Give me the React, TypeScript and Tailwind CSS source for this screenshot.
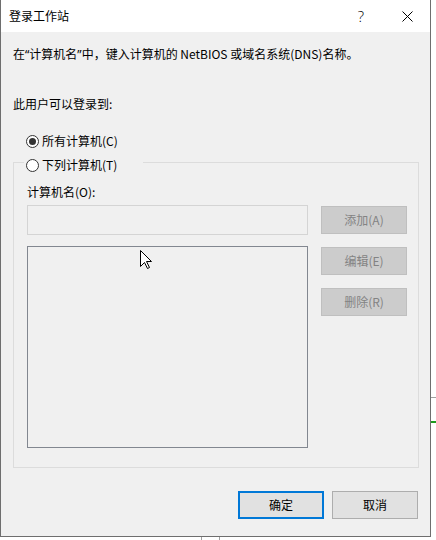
import React from "react";

const font = { fontFamily: '"Noto Sans CJK SC", "Noto Sans", sans-serif' };
const latin = { fontFamily: '"Noto Sans", sans-serif' };

function Radio({ checked, label }: { checked?: boolean; label: string }) {
  return (
    <div className="flex items-center h-4">
      <span className="w-[13px] h-[13px] rounded-full border border-[#333333] bg-white flex items-center justify-center">
        {checked && <span className="w-[7px] h-[7px] rounded-full bg-[#333333]" />}
      </span>
      <span className="ml-[3px] leading-4">{label}</span>
    </div>
  );
}

function DisabledBtn({ label }: { label: string }) {
  return (
    <div className="w-[86px] h-[28px] bg-[#cccccc] border border-[#bfbfbf] flex items-center justify-center text-[#838383] leading-4">
      {label}
    </div>
  );
}

export default function App() {
  return (
    <div className="relative w-[436px] h-[540px] bg-white overflow-hidden text-[12px] text-black" style={font}>
      <div className="w-[431px] h-[537px] border-l border-r border-b border-[#6e6e6e] bg-[#f0f0f0] flex flex-col">
        {/* Title bar */}
        <div className="h-[32px] bg-white flex items-center pl-[8px]">
          <div className="flex-1 leading-4">登录工作站</div>
          <div className="w-[46px] h-[32px] flex items-center justify-center text-[15px] font-light leading-none text-black" style={{ fontFamily: '"Open Sans", sans-serif' }}>
            ?
          </div>
          <div className="w-[46px] h-[32px] flex items-center justify-center">
            <svg width="11" height="11" viewBox="0 0 11 11">
              <path d="M0.5 0.5 L10.5 10.5 M10.5 0.5 L0.5 10.5" stroke="#000" strokeWidth="1" />
            </svg>
          </div>
        </div>

        {/* Body */}
        <div className="pl-[12px] flex flex-col">
          <div className="pt-[14px] leading-4">
            在<span style={latin}>“</span>计算机名<span style={latin}>”</span>中，键入计算机的 NetBIOS 或域名系统(DNS)名称。
          </div>
          <div className="mt-[33px] leading-4">此用户可以登录到:</div>
          <div className="mt-[21px] pl-[13px]">
            <Radio checked label="所有计算机(C)" />
          </div>

          <div className="relative mt-[13px] w-[406px] h-[306px] border border-[#dcdcdc]">
            <div className="absolute -top-[6px] left-[10px] w-[119px] pl-[2px] bg-[#f0f0f0]">
              <Radio label="下列计算机(T)" />
            </div>
            <div className="pt-[21px] pl-[13px] leading-4">计算机名(O):</div>
            <div className="mt-[5px] pl-[13px] flex">
              <div className="w-[281px] flex flex-col">
                <div className="h-[30px] border border-[#d4d4d4] bg-[#f0f0f0]" />
                <div className="mt-[11px] h-[202px] border border-[#828790] bg-[#f0f0f0]" />
              </div>
              <div className="ml-[13px] mt-[1px] flex flex-col gap-[13px]">
                <DisabledBtn label="添加(A)" />
                <DisabledBtn label="编辑(E)" />
                <DisabledBtn label="删除(R)" />
              </div>
            </div>
          </div>

          <div className="mt-[23px] pr-[12px] flex justify-end gap-[8px]">
            <div className="w-[86px] h-[28px] border-2 border-[#0078d7] bg-[#e1e1e1] flex items-center justify-center leading-4">确定</div>
            <div className="w-[86px] h-[28px] border border-[#adadad] bg-[#e1e1e1] flex items-center justify-center leading-4">取消</div>
          </div>
        </div>
      </div>

      {/* background fragments outside dialog */}
      <div className="absolute left-[431px] top-[397px] w-[5px] h-px bg-[#a0a0a0]" />
      <div className="absolute left-[431px] top-[421px] w-[5px] h-[2px] bg-[#1e9a1e]" />
      <div className="absolute left-[201px] top-[537px] w-px h-[3px] bg-[#a0a0a0]" />
      <div className="absolute left-[219px] top-[537px] w-px h-[3px] bg-[#a0a0a0]" />

      {/* mouse cursor */}
      <svg className="absolute left-[140px] top-[250px]" width="13" height="20" viewBox="0 0 13 20">
        <path d="M0.5 0.5 L0.5 16.5 L4.5 12.5 L7.5 18.5 L9.5 17.5 L6.5 11.5 L11.5 11.5 Z" fill="#fff" stroke="#000" strokeWidth="1" strokeLinejoin="round" />
      </svg>
    </div>
  );
}
